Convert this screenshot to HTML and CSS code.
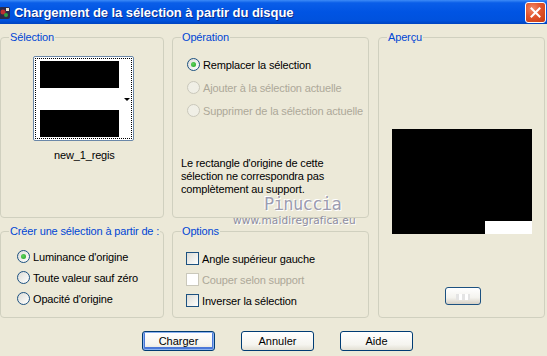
FILE: index.html
```html
<!DOCTYPE html>
<html lang="fr">
<head>
    <meta charset="UTF-8">
    <title>Chargement de la sélection à partir du disque</title>
    <link rel="stylesheet" href="styles.css">
</head>
<body>
    <div class="window">
        <div class="titlebar">
            <svg class="app-icon" width="12" height="14" viewBox="0 0 12 14">
                <rect x="0" y="1" width="11" height="12" fill="#2a2a4a" rx="2"/>
                <circle cx="4" cy="6" r="2.5" fill="#c03030"/>
                <circle cx="7" cy="9" r="2" fill="#30a040"/>
                <rect x="7" y="2" width="3" height="3" fill="#f0e8d0"/>
            </svg>
            <span class="title">Chargement de la sélection à partir du disque</span>
            <button class="close-btn" title="Fermer">
                <svg width="11" height="11" viewBox="0 0 11 11">
                    <path d="M1.5 1.5 L9.5 9.5 M9.5 1.5 L1.5 9.5" stroke="white" stroke-width="2" stroke-linecap="square"/>
                </svg>
            </button>
        </div>

        <div class="content">
            <fieldset class="group sel-group">
                <legend>Sélection</legend>
                <div class="thumb">
                    <div class="thumb-inner">
                        <div class="thumb-img">
                            <div class="bar-black"></div>
                            <div class="bar-white"></div>
                            <div class="bar-black bottom"></div>
                        </div>
                        <span class="thumb-arrow"></span>
                    </div>
                </div>
                <div class="thumb-name">new_1_regis</div>
            </fieldset>

            <fieldset class="group op-group">
                <legend>Opération</legend>
                <label class="opt"><span class="radio checked"></span>Remplacer la sélection</label>
                <label class="opt disabled"><span class="radio"></span>Ajouter à la sélection actuelle</label>
                <label class="opt disabled"><span class="radio"></span>Supprimer de la sélection actuelle</label>
                <p class="note">Le rectangle d'origine de cette<br>sélection ne correspondra pas<br>complètement au support.</p>
            </fieldset>

            <fieldset class="group preview-group">
                <legend>Aperçu</legend>
                <div class="preview">
                    <div class="preview-hole"></div>
                </div>
                <button class="small-btn"><span></span></button>
            </fieldset>

            <fieldset class="group create-group">
                <legend>Créer une sélection à partir de :</legend>
                <label class="opt"><span class="radio checked"></span>Luminance d'origine</label>
                <label class="opt"><span class="radio"></span>Toute valeur sauf zéro</label>
                <label class="opt"><span class="radio"></span>Opacité d'origine</label>
            </fieldset>

            <fieldset class="group options-group">
                <legend>Options</legend>
                <label class="opt"><span class="check"></span>Angle supérieur gauche</label>
                <label class="opt disabled"><span class="check"></span>Couper selon support</label>
                <label class="opt"><span class="check"></span>Inverser la sélection</label>
            </fieldset>

            <div class="watermark">
                <div class="wm-name">Pinuccia</div>
                <div class="wm-url">www.maidiregrafica.eu</div>
            </div>
        </div>

        <div class="buttons">
            <button class="btn default">Charger</button>
            <button class="btn">Annuler</button>
            <button class="btn">Aide</button>
        </div>
    </div>
</body>
</html>
```

FILE: styles.css
```css
* {
    margin: 0;
    padding: 0;
    box-sizing: border-box;
}

body {
    width: 547px;
    height: 356px;
    overflow: hidden;
    background: #ece9d8;
    font-family: 'Liberation Sans', Arial, sans-serif;
    font-size: 11px;
    letter-spacing: -0.15px;
    color: #000;
}

.window {
    width: 547px;
    height: 356px;
    background: #ece9d8;
}

/* title bar */
.titlebar {
    height: 24px;
    display: flex;
    align-items: center;
    background: linear-gradient(180deg, #3d8bf7 0%, #0a5ee8 12%, #0054e3 50%, #0052dd 85%, #0044c0 100%);
}

.app-icon {
    margin-left: -1px;
    margin-top: 1px;
}

.title {
    margin-left: 3px;
    color: white;
    font-family: 'Liberation Sans', Arial, sans-serif;
    font-weight: bold;
    font-size: 13px;
    letter-spacing: -0.05px;
    text-shadow: 1px 1px 0 #0a2a8a;
}

.close-btn {
    margin-left: auto;
    margin-right: 1px;
    width: 21px;
    height: 21px;
    border: 1px solid white;
    border-radius: 3px;
    background: radial-gradient(circle at 35% 30%, #f08a6a 0%, #e2542c 45%, #c63a10 100%);
    display: flex;
    align-items: center;
    justify-content: center;
}

/* main grid */
.content {
    position: relative;
    display: grid;
    grid-template-columns: 164px 197px 168px;
    grid-template-rows: 187px 93px;
    column-gap: 8px;
    row-gap: 7px;
    padding-top: 7px;
}

.sel-group { grid-column: 1; grid-row: 1; }
.op-group { grid-column: 2; grid-row: 1; }
.preview-group { grid-column: 3; grid-row: 1 / span 2; margin-left: 1px; }
.create-group { grid-column: 1; grid-row: 2; }
.options-group { grid-column: 2; grid-row: 2; }

.group {
    border: 1px solid #d0d0bf;
    border-radius: 4px;
    padding: 0 8px;
    min-width: 0;
}

.group legend {
    color: #0046d5;
    padding: 0 1px;
    line-height: 13px;
    white-space: nowrap;
}

/* selection thumbnail */
.thumb {
    width: 101px;
    height: 85px;
    margin: 12px 0 0 24px;
    border: 1px solid #6a87a8;
    border-radius: 2px;
    padding: 1px;
    background: white;
}

.thumb-inner {
    position: relative;
    height: 100%;
    border: 1px dotted #000;
    padding: 2px 12px 1px 4px;
}

.thumb-img {
    display: flex;
    flex-direction: column;
    height: 100%;
}

.bar-black {
    height: 27px;
    background: #000;
}

.bar-black.bottom {
    flex: 1;
}

.bar-white {
    height: 22px;
}

.thumb-arrow {
    position: absolute;
    right: 1px;
    top: 39px;
    border-left: 3px solid transparent;
    border-right: 3px solid transparent;
    border-top: 3px solid #000;
}

.thumb-name {
    margin: 8px 0 0 45px;
}

/* radios and checkboxes */
.opt {
    display: flex;
    align-items: center;
    gap: 3px;
    height: 13px;
    margin-left: 6px;
    margin-bottom: 8px;
    white-space: nowrap;
}

.op-group .opt { margin-bottom: 10px; }
.op-group .opt:first-of-type { margin-top: 14px; }
.create-group .opt { margin-left: 8px; }
.create-group .opt:first-of-type { margin-top: 12px; }
.options-group .opt { margin-left: 5px; }
.options-group .opt:first-of-type { margin-top: 14px; }

.opt.disabled {
    color: #aca899;
}

.radio {
    width: 13px;
    height: 13px;
    border: 1px solid #1c5180;
    border-radius: 50%;
    background: linear-gradient(135deg, #dcdcd7 0%, #f2f2ef 60%, #ffffff 100%);
    display: flex;
    align-items: center;
    justify-content: center;
    flex: none;
}

.radio.checked::after {
    content: "";
    width: 5px;
    height: 5px;
    border-radius: 50%;
    background: radial-gradient(circle at 40% 40%, #5ed35e, #21a121);
}

.disabled .radio {
    border-color: #cac8bb;
    background: #f0efe6;
}

.check {
    width: 13px;
    height: 13px;
    border: 1px solid #1c5180;
    background: linear-gradient(135deg, #dcdcd7 0%, #f4f4f1 70%, #ffffff 100%);
    flex: none;
}

.disabled .check {
    border-color: #cac8bb;
    background: #ffffff;
}

.note {
    margin-top: 40px;
    line-height: 13px;
    white-space: nowrap;
}

/* preview */
.preview {
    width: 140px;
    height: 105px;
    margin: 85px 0 0 5px;
    background: #000;
    position: relative;
}

.preview-hole {
    position: absolute;
    right: 0;
    bottom: 0;
    width: 47px;
    height: 13px;
    background: white;
}

.small-btn {
    display: block;
    width: 36px;
    height: 18px;
    margin: 53px 0 0 58px;
    border: 1px solid #1c5180;
    border-radius: 3px;
    background: linear-gradient(180deg, #ffffff 0%, #f4f3ee 60%, #d6d0c5 100%);
}

.small-btn span {
    display: block;
    width: 14px;
    height: 6px;
    margin: 1px auto 0;
    background: repeating-linear-gradient(90deg, #e4e4e4 0 3px, #ffffff 3px 6px);
}

/* watermark */
.watermark {
    position: absolute;
    left: 233px;
    top: 170px;
    color: #9c9cb0;
    letter-spacing: 0;
    pointer-events: none;
}

.wm-name {
    font-family: 'DejaVu Sans Mono', monospace;
    font-size: 17px;
    line-height: 20px;
    margin-left: 31px;
    letter-spacing: -0.6px;
    text-shadow: 1px 1px 0 #fff, -1px -1px 0 #fff;
}

.wm-url {
    font-family: 'DejaVu Sans', sans-serif;
    font-size: 10.5px;
    letter-spacing: 0.1px;
    line-height: 12px;
    color: #8c8ca0;
    text-shadow: 1px 1px 0 #fff;
}

/* bottom buttons */
.buttons {
    display: flex;
    gap: 26px;
    padding: 13px 0 0 142px;
}

.btn {
    width: 73px;
    height: 20px;
    font-family: 'Liberation Sans', Arial, sans-serif;
    font-size: 11px;
    color: #000;
    border: 1px solid #003c74;
    border-radius: 3px;
    background: linear-gradient(180deg, #ffffff 0%, #f5f4ef 70%, #e3e0d4 100%);
}

.btn.default {
    box-shadow: inset 0 0 0 1px #8cb2f0, inset 0 -1px 0 2px #4b78d8;
}
```
